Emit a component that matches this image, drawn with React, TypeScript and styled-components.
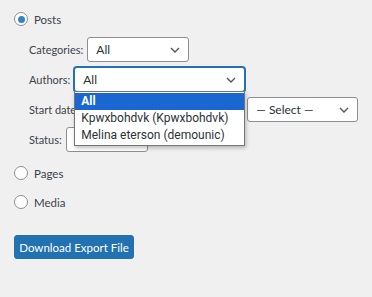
import styled, { createGlobalStyle, css } from "styled-components";

const GlobalStyle = createGlobalStyle`
  html, body {
    margin: 0;
    padding: 0;
    background: #f0f0f1;
  }
  body {
    font-family: Lato, "Liberation Sans", sans-serif;
    font-size: 11px;
    color: #3c434a;
  }
`;

const Page = styled.div`
  padding: 11px 14px 0;
`;

const RadioRow = styled.label<{ $gap?: number }>`
  display: flex;
  align-items: center;
  height: 16px;
  margin-top: ${(p) => p.$gap ?? 0}px;
  gap: 6px;
  font-size: 11.5px;
  color: #3c434a;
`;

const Radio = styled.span<{ $checked?: boolean }>`
  box-sizing: border-box;
  width: 14px;
  height: 14px;
  border-radius: 50%;
  border: 1px solid #8c8f94;
  background: #fff;
  display: flex;
  align-items: center;
  justify-content: center;
  ${(p) =>
    p.$checked &&
    css`
      &::after {
        content: "";
        width: 7px;
        height: 7px;
        border-radius: 50%;
        background: #3582c4;
      }
    `}
`;

const Filters = styled.ul`
  list-style: none;
  margin: 10px 0 0 15px;
  padding: 0;
  display: flex;
  flex-direction: column;
  gap: 5px;
`;

const FilterRow = styled.li`
  display: flex;
  align-items: center;
  height: 25px;
  white-space: nowrap;
`;

const Label = styled.span<{ $before?: number }>`
  margin-left: ${(p) => p.$before ?? 0}px;
  margin-right: 4px;
  color: #3c434a;
`;

const SelectBox = styled.div<{ $w: number; $focus?: boolean }>`
  position: relative;
  box-sizing: border-box;
  width: ${(p) => p.$w}px;
  height: 25px;
  flex: none;
  display: flex;
  align-items: center;
  padding: 0 8px;
  background: #fff;
  border: 1px solid #8c8f94;
  border-radius: 3px;
  color: #2c3338;
  font-size: 12px;
  ${(p) =>
    p.$focus &&
    css`
      border-color: #2271b1;
      box-shadow: 0 0 0 1px #2271b1;
    `}
`;

const Value = styled.span`
  flex: 1;
`;

const Options = styled.div`
  position: absolute;
  top: 100%;
  left: -1px;
  right: -1px;
  box-sizing: border-box;
  background: #fff;
  border: 1px solid #767676;
  box-shadow: 1px 2px 4px rgba(0, 0, 0, 0.25);
  padding: 1px 0;
  z-index: 2;
  font-family: Roboto, "Liberation Sans", sans-serif;
`;

const Option = styled.div<{ $active?: boolean }>`
  height: 17px;
  line-height: 17px;
  padding: 0 6px;
  color: #2c3338;
  ${(p) =>
    p.$active &&
    css`
      background: #1a67d2;
      color: #fff;
      font-weight: 700;
    `}
`;

const Button = styled.button`
  margin-top: 25px;
  box-sizing: border-box;
  width: 120px;
  height: 24px;
  padding: 0;
  border: 1px solid #2271b1;
  border-radius: 3px;
  background: #2271b1;
  color: #fff;
  font-family: inherit;
  font-size: 11.5px;
  cursor: pointer;
`;

const Chevron = () => (
  <svg width="10" height="6" viewBox="0 0 10 6" fill="none">
    <path d="M1 1l4 4 4-4" stroke="#50575e" strokeWidth="1.4" />
  </svg>
);

const Select = ({
  value,
  width,
  focus,
  options,
}: {
  value: string;
  width: number;
  focus?: boolean;
  options?: string[];
}) => (
  <SelectBox $w={width} $focus={focus}>
    <Value>{value}</Value>
    <Chevron />
    {options && (
      <Options>
        {options.map((o, i) => (
          <Option key={o} $active={i === 0}>
            {o}
          </Option>
        ))}
      </Options>
    )}
  </SelectBox>
);

export default function App() {
  return (
    <>
      <GlobalStyle />
      <Page>
        <RadioRow>
          <Radio $checked />
          Posts
        </RadioRow>
        <Filters>
          <FilterRow>
            <Label>Categories:</Label>
            <Select value="All" width={102} />
          </FilterRow>
          <FilterRow>
            <Label>Authors:</Label>
            <Select
              value="All"
              width={171}
              focus
              options={["All", "Kpwxbohdvk (Kpwxbohdvk)", "Melina eterson (demounic)"]}
            />
          </FilterRow>
          <FilterRow>
            <Label>Start date:</Label>
            <Select value="— Select —" width={111} />
            <Label $before={4}>End date:</Label>
            <Select value="— Select —" width={111} />
          </FilterRow>
          <FilterRow>
            <Label>Status:</Label>
            <Select value="All" width={82} />
          </FilterRow>
        </Filters>
        <RadioRow $gap={13}>
          <Radio />
          Pages
        </RadioRow>
        <RadioRow $gap={13}>
          <Radio />
          Media
        </RadioRow>
        <Button>Download Export File</Button>
      </Page>
    </>
  );
}
